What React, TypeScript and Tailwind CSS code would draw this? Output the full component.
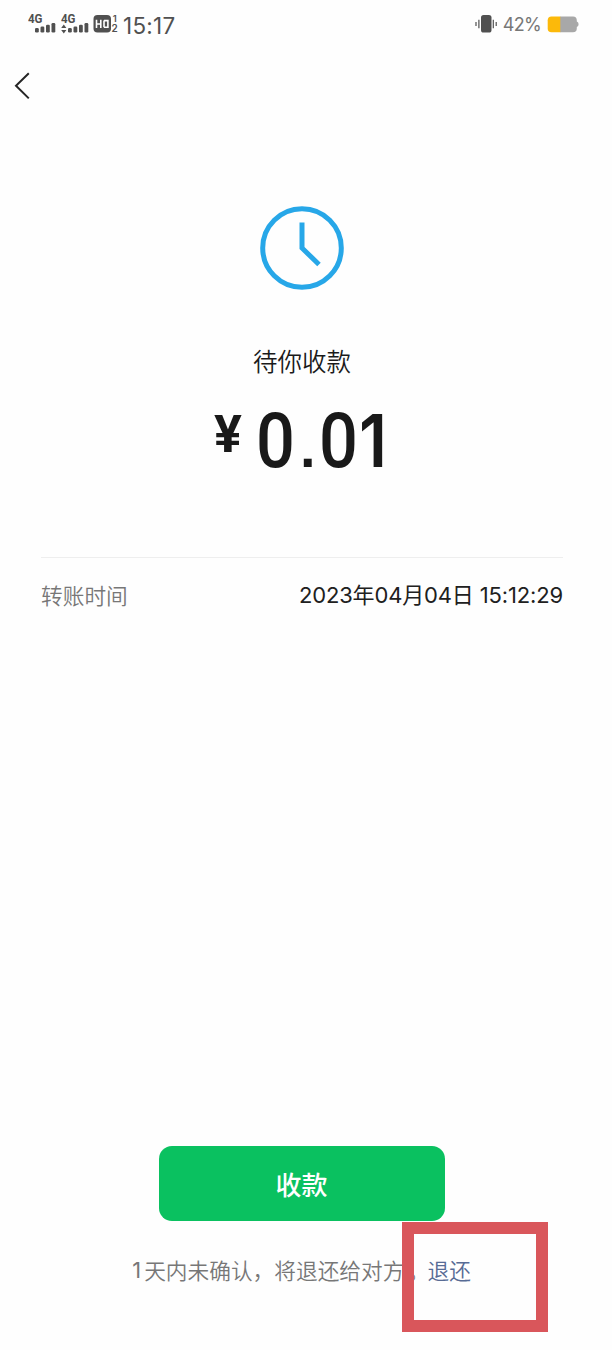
import React from "react";

const cjk = "font-['Noto_Sans_CJK_SC',sans-serif]";
const latin = "font-['Inter','Noto_Sans_CJK_SC',sans-serif]";

function Signal({ arrows }: { arrows?: boolean }) {
  return (
    <svg width="28" height="22" viewBox="0 0 28 22" fill="#505050">
      <text x="0" y="10" fontFamily="Roboto, sans-serif" fontWeight="700" fontSize="12" textLength="14.5" lengthAdjust="spacingAndGlyphs">4G</text>
      {arrows && <path d="M0.2 14.9 L2.8 11.6 L5.4 14.9Z M0.2 17.1 L2.8 20.4 L5.4 17.1Z" />}
      <rect x="7" y="15" width="3.8" height="4.5" rx="1.3" />
      <rect x="12.5" y="13.5" width="3.8" height="6" rx="1.3" />
      <rect x="18" y="11.8" width="3.8" height="7.7" rx="1.3" />
      <rect x="23.5" y="10" width="3.8" height="9.5" rx="1.3" />
    </svg>
  );
}

function HdBadge() {
  return (
    <svg width="27" height="22" viewBox="0 0 27 22" fill="#505050">
      <rect x="0.5" y="2" width="17.5" height="17.5" rx="4" />
      <path d="M3.5 6.8v8.2M7.8 6.8v8.2M3.5 11h4.3M11 7.6v6.6M11 7.6h3.9v6.6H11" fill="none" stroke="#fff" strokeWidth="1.6" />
      <text x="19.7" y="9" fontFamily="Inter, sans-serif" fontWeight="600" fontSize="9.5">1</text>
      <text x="18.6" y="19.3" fontFamily="Inter, sans-serif" fontWeight="600" fontSize="10">2</text>
    </svg>
  );
}

function StatusBar() {
  return (
    <header className="flex h-[50px] items-start justify-between pl-[28px] pr-[33px] pt-[13px]">
      <div className="flex items-start">
        <Signal />
        <div className="ml-[5px]"><Signal arrows /></div>
        <div className="ml-[4px]"><HdBadge /></div>
        <span className={`${latin} ml-[3px] text-[22.4px] leading-[25px] tracking-[0.3px] text-[#505050]`}>15:17</span>
      </div>
      <div className="flex items-start">
        <svg width="22" height="22" viewBox="0 0 22 22" fill="#505050">
          <rect x="6" y="2" width="10.5" height="17.5" rx="2.6" />
          <path d="M1 9v4M3.9 6.8v8.4M18.3 6.8v8.4M21.2 9v4" stroke="#505050" strokeWidth="1.2" />
        </svg>
        <span className={`${latin} ml-[6px] text-[18px] leading-[24px] tracking-[-0.7px] text-[#777777]`}>42%</span>
        <svg className="ml-[6px]" width="32" height="22" viewBox="0 0 32 22">
          <path d="M13 3.5h13q3.8 0 3.8 3.8v1.2q1.8.6 1.8 2.8t-1.8 2.8v1.3q0 3.8-3.8 3.8H13Z" fill="#a8a8a8" />
          <path d="M13.3 3.5H4.5Q.7 3.5.7 7.3v8.1q0 3.8 3.8 3.8h8.8Z" fill="#fcb90a" />
        </svg>
      </div>
    </header>
  );
}

export default function App() {
  return (
    <main className="relative flex h-[1350px] w-[612px] flex-col overflow-hidden bg-[#fefefe]">
      <StatusBar />
      <nav className="h-[155px] pl-[14px] pt-[22px]">
        <svg width="17" height="28" viewBox="0 0 17 28" fill="none" stroke="#252525" strokeWidth="2">
          <path d="M14.8 1.2 2 13.7l12.8 12.7" />
        </svg>
      </nav>
      <section className="flex h-[352px] flex-col items-center pr-[8px]">
        <svg width="86" height="86" viewBox="0 0 86 86" fill="none" stroke="#27a7e8" strokeWidth="5">
          <circle cx="43" cy="43" r="39.3" />
          <path d="M43 17.5V43l17 16.5" />
        </svg>
        <h1 className={`${cjk} mt-[52px] text-[24.5px] font-[350] leading-[36px] text-[#1a1a1a]`}>待你收款</h1>
        <div className="mt-[21px] flex w-[176px] items-start whitespace-nowrap font-['Roboto',sans-serif] text-[#191919]">
          <span className="mt-[5px] w-[42px] text-[52px] font-bold leading-[60px]">¥</span>
          <div className="flex items-baseline text-[76px] font-medium leading-[82px]">
            <span className="ml-[1px] w-[44px] origin-left scale-x-[0.9]">0</span>
            <span className="w-[19px] font-['Liberation_Sans',sans-serif] text-[56px] font-bold leading-none">.</span>
            <span className="w-[40px] origin-left scale-x-[0.9]">0</span>
            <span className="origin-left scale-x-[0.9] font-['Inter',sans-serif] text-[73.5px] font-semibold leading-none">1</span>
          </div>
        </div>
      </section>
      <section className="mx-auto flex h-[76px] w-[522px] -translate-x-[4px] items-center justify-between border-t border-[#eeeeee]">
        <span className={`${cjk} text-[21.7px] font-[350] text-[#777777]`}>转账时间</span>
        <span className={`${latin} text-[22px] font-[380] tracking-[-0.15px] text-[#202020]`}>2023年04月04日 15:12:29</span>
      </section>
      <footer className="mt-auto flex h-[204px] flex-col items-center pr-[9px]">
        <button className={`${cjk} h-[75px] w-[286px] rounded-[13px] bg-[#0ac160] text-[26px] font-medium text-white`}>收款</button>
        <p className={`${cjk} mt-[33px] flex whitespace-nowrap text-[21.7px] font-[350] leading-[32px] text-[#777777]`}>
          <span className="w-[12px] font-['Inter',sans-serif] font-normal">1</span>
          <span>天内未确认，将退还给对方</span>
          <span className="w-[23px] pl-[3px]">。</span>
          <a className="text-[#576b95]">退还</a>
        </p>
      </footer>
      <div className="absolute left-[402px] top-[1222px] h-[110px] w-[146px] border-[12.5px] border-[#d9565b]" />
    </main>
  );
}
